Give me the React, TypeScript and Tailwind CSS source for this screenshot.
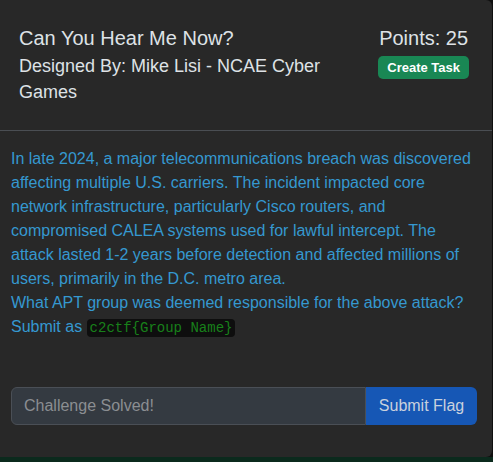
export default function App() {
  return (
    <div className="h-[462px] w-[493px] overflow-hidden bg-[#0f0f0f] font-['Liberation_Sans',Arial,sans-serif]">
      {/* Modal */}
      <div className="flex h-[457px] w-[492px] flex-col rounded-r-md bg-[#282828]">
        {/* Header */}
        <div className="flex justify-between border-b border-[#4a4e53] pt-[26px] pb-[25px] pl-[19px] pr-[23px]">
          <div className="w-[320px]">
            <h5 className="text-[20px] leading-[24px] text-[#dee2e6]">Can You Hear Me Now?</h5>
            <p className="mt-[3px] text-[18px] leading-[26px] text-[#dee2e6]">
              Designed By: Mike Lisi - NCAE Cyber Games
            </p>
          </div>
          <div className="flex flex-col items-center">
            <div className="text-[20px] leading-[24px] text-[#dee2e6]">Points: 25</div>
            <span className="mt-[6px] rounded-[5px] bg-[#198754] px-[9px] text-[13px] font-bold leading-[23px] text-white">
              Create Task
            </span>
          </div>
        </div>

        {/* Body */}
        <div className="px-[11px] pt-[16px]">
          <p className="text-[16px] leading-[24px] text-[#3598d0]">
            In late 2024, a major telecommunications breach was discovered affecting multiple U.S. carriers. The
            incident impacted core network infrastructure, particularly Cisco routers, and compromised CALEA systems
            used for lawful intercept. The attack lasted 1-2 years before detection and affected millions of users,
            primarily in the D.C. metro area.
            <br />
            What APT group was deemed responsible for the above attack? Submit as{' '}
            <code className="rounded-[4px] bg-[#0e0e0e] px-[3px] py-[1px] font-['Liberation_Mono',monospace] text-[14px] text-[#18801a]">
              c2ctf{'{'}Group Name{'}'}
            </code>
          </p>

          <div className="mt-[47px] flex h-[38px] w-[466px]">
            <input
              className="min-w-0 flex-1 rounded-l-md border border-[#4a4f56] bg-[#343a41] px-[12px] text-[16px] text-[#dee2e6] outline-none placeholder:text-[#8b8e92]"
              placeholder="Challenge Solved!"
            />
            <button className="w-[111px] rounded-r-md bg-[#1657b5] text-[16px] text-[#c9d1dd]">Submit Flag</button>
          </div>
        </div>
      </div>
      <div className="h-[5px] bg-[#0b2a1d]" />
    </div>
  );
}
